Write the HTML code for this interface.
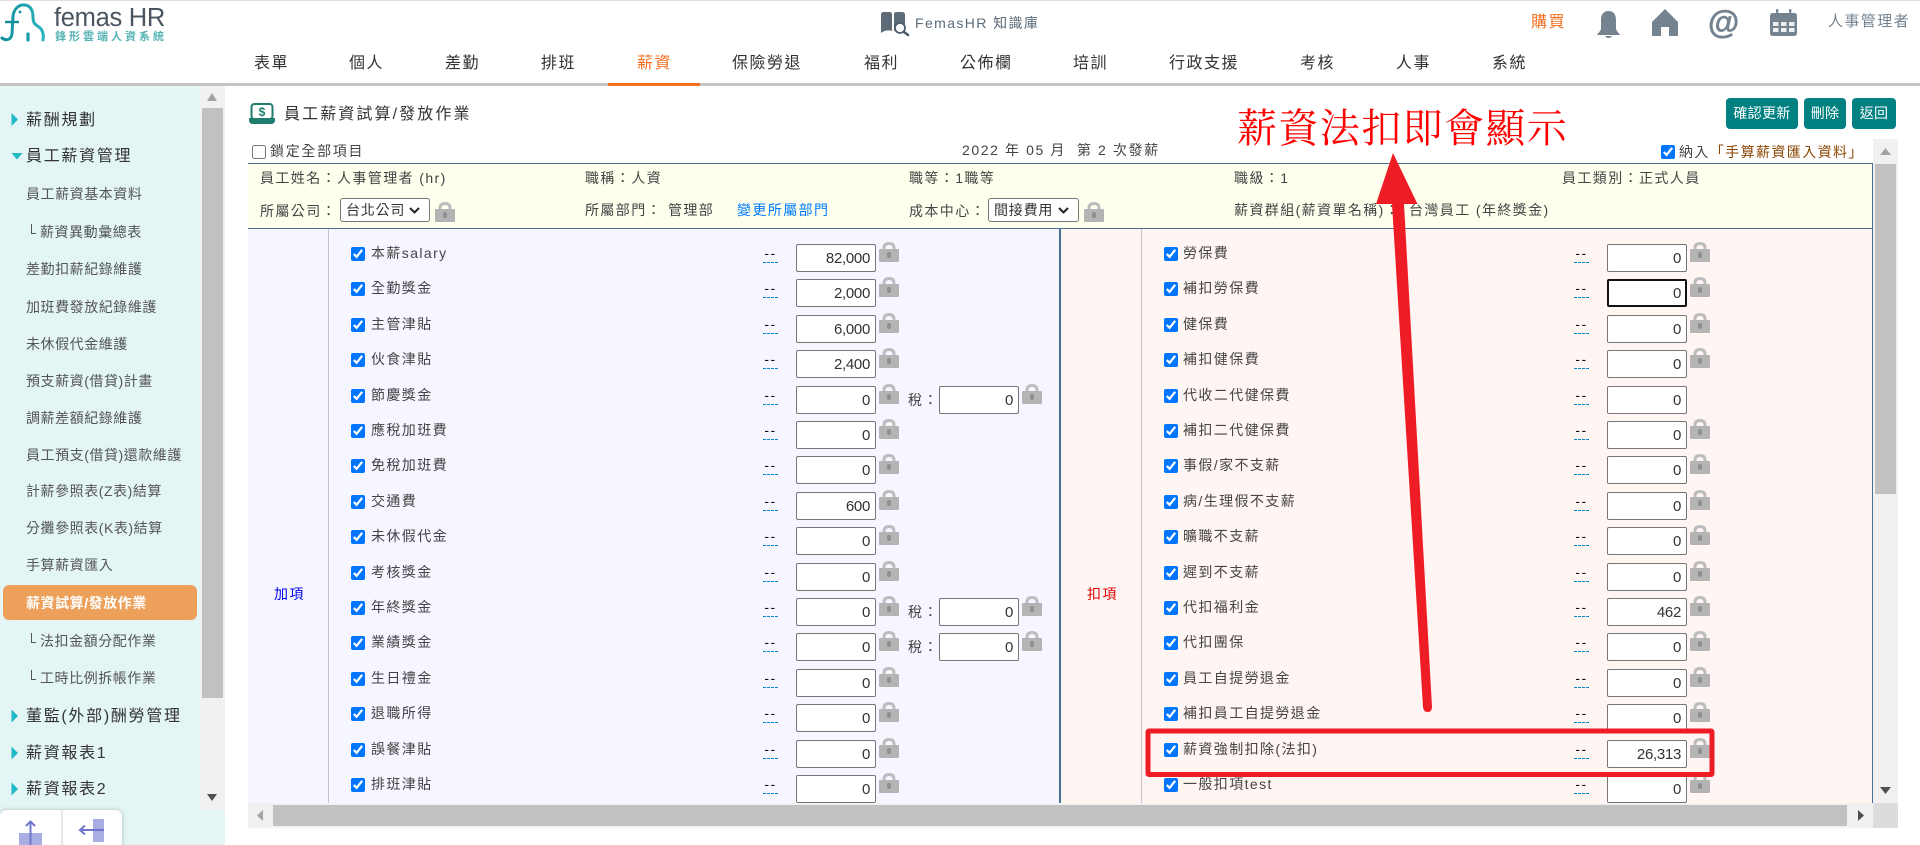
<!DOCTYPE html>
<html lang="zh-Hant"><head><meta charset="utf-8"><title>員工薪資試算/發放作業</title>
<style>
html,body{margin:0;padding:0;width:1920px;height:845px;overflow:hidden;background:#fff}
body{font-family:"Liberation Sans","Noto Sans CJK TC",sans-serif;font-size:14px;color:#444;position:relative}
div,span,a,input,select,svg{position:absolute}
.t{white-space:nowrap;line-height:20px;letter-spacing:1.4px}
.n{font-size:16px;letter-spacing:1.5px;color:#333;top:54px}
.h{font-size:16px;letter-spacing:1.7px;color:#333;left:26px}
.s{letter-spacing:.55px;color:#555;left:26px}
.ss{letter-spacing:.55px;color:#555;left:40px}
.ss:before{content:"";position:absolute;left:-9px;top:2px;width:4px;height:9px;border-left:1px solid #555;border-bottom:1px solid #555}
.b{background:#008080;color:#fff;border-radius:4px;top:98px;height:31px;line-height:30px;text-align:center;letter-spacing:.3px;font-size:14px}
input[type=checkbox]{margin:0;width:14px;height:14px}
.v{width:80px;height:28px;box-sizing:border-box;border:1px solid #767676;border-radius:2px;background:#fff;text-align:right;font-size:15px;line-height:27px;padding-right:5px;color:#333;letter-spacing:-.3px}
.d{width:15px;height:18px;border-bottom:1px dashed #0088cc;line-height:18px;text-align:center;color:#111;letter-spacing:1.5px;font-size:14px}
.x{left:763px}.y{left:1574px}
.l{left:371px}.r{left:1183px}
.c1{left:351px}.c2{left:1164px}
.v1{left:796px}.v2{left:1607px}.v3{left:939px}
select{-webkit-appearance:none;appearance:none;font:14px "Liberation Sans","Noto Sans CJK TC",sans-serif;height:24px;top:198px;background:#fff;color:#333;letter-spacing:.8px;padding:0 0 0 5px;border:1px solid #767676;border-radius:3px}
</style></head><body>
<div style="left:0;top:0;width:1920px;height:1px;background:#e0e0e0"></div>
<svg style="left:0;top:0" width="50" height="46" fill="none"><defs><linearGradient id="g" x1="0" x2="1"><stop offset="0" stop-color="#0f8f9c"/><stop offset="1" stop-color="#2db3bd"/></linearGradient></defs>
<path d="M2 38C6 41 11 40 12 34L13 16C14 8 20 4 25 5C31 6 33 11 33 17C33 24 36 25 39 27C43 30 44 34 43 40" stroke="url(#g)" stroke-width="3" stroke-linecap="round"/><path d="M5 22H19" stroke="#0f8f9c" stroke-width="2.4"/><circle cx="20" cy="12" r="1.4" fill="#0f8f9c"/><path d="M28 34V40" stroke="#1a9ea9" stroke-width="3.2" stroke-linecap="round"/></svg>
<div class="t" style="left:54px;top:1px;font-size:25.500px;line-height:34px;color:#4a5560;letter-spacing:-.3px">femas HR</div>
<div class="t" style="left:55px;top:27px;font-size:11px;letter-spacing:3px;color:#56b3b6;font-weight:bold">鋒形雲端人資系統</div>
<svg style="left:878px;top:8px" width="34" height="30"><path d="M3 7C3 5 4 4 6 4H12C13 4 14 5 14 6V23C11 22 7 22 3 25Z M16 6C16 5 17 4 18 4H24C26 4 27 5 27 7V25C23 22 19 22 16 23Z" fill="#5d6b78"/><circle cx="22" cy="20" r="5" fill="#fff" stroke="#4f5d69" stroke-width="1.8"/><path d="M26 24L30 27" stroke="#4f5d69" stroke-width="2.6" stroke-linecap="round"/></svg>
<div class="t" style="left:915px;top:13px;color:#5b6b78;letter-spacing:1.4px">FemasHR 知識庫</div>
<div class="t" style="left:1531px;top:13px;font-size:16px;letter-spacing:1.5px;color:#f37021">購買</div>
<svg style="left:0;top:0" width="1920" height="50" fill="#74838f"><path d="M1608.5 11C1603 11 1601 15 1601 20V28C1601 31 1598 33 1597 35H1620C1619 33 1616 31 1616 28V20C1616 15 1614 11 1608.5 11Z"/><path d="M1605 36H1612Q1611 38 1608.5 38T1605 36Z"/><path d="M1665 9L1652 22V35A1 1 0 0 0 1653 36H1661V27H1669V36H1677A1 1 0 0 0 1678 35V22Z"/><path d="M1773 13H1794Q1797 13 1797 16V33Q1797 36 1794 36H1773Q1770 36 1770 33V16Q1770 13 1773 13Z"/><rect x="1776" y="9" width="2.4" height="4" rx="1"/><rect x="1789" y="9" width="2.4" height="4" rx="1"/><g fill="#eef1f3"><rect x="1773" y="22" width="5.5" height="4"/><rect x="1781" y="22" width="5.5" height="4"/><rect x="1789" y="22" width="5.5" height="4"/><rect x="1773" y="28" width="5.5" height="4"/><rect x="1781" y="28" width="5.5" height="4"/><rect x="1789" y="28" width="5.5" height="4"/></g></svg>
<div class="t" style="left:1708px;top:4px;font-size:32px;line-height:36px;font-weight:bold;color:#74838f;letter-spacing:0;-webkit-text-stroke:.5px #74838f">@</div>
<div class="t" style="left:1828px;top:12px;font-size:15px;color:#74838f;letter-spacing:1.4px">人事管理者</div>

<div class="t n" style="left:254px">表單</div><div class="t n" style="left:349px">個人</div><div class="t n" style="left:445px">差勤</div><div class="t n" style="left:541px">排班</div><div class="t n" style="left:637px;color:#f37021">薪資</div><div class="t n" style="left:732px">保險勞退</div><div class="t n" style="left:864px">福利</div><div class="t n" style="left:960px">公佈欄</div><div class="t n" style="left:1073px">培訓</div><div class="t n" style="left:1169px">行政支援</div><div class="t n" style="left:1300px">考核</div><div class="t n" style="left:1396px">人事</div><div class="t n" style="left:1492px">系統</div>
<div style="left:0;top:83px;width:1920px;height:3px;background:#c4c4c4"></div>
<div style="left:608px;top:83px;width:92px;height:3px;background:#f37021"></div>

<div style="left:0;top:86px;width:225px;height:759px;background:#e3f5f5"></div>
<div style="left:200px;top:86px;width:25px;height:724px;background:#f1f1f1"></div>
<div style="left:202px;top:108px;width:21px;height:590px;background:#c1c1c1"></div>
<svg style="left:0;top:86px" width="225" height="724"><path d="M207 15L212 7L217 15Z" fill="#a3a3a3"/><path d="M207 708H217L212 715Z" fill="#505050"/><path d="M11.500 27L18 33.500L11.500 40Z M11.500 67H22.500L17 73.500Z M11.500 623.500L18 630L11.500 636.500Z M11.500 660.500L18 667L11.500 673.500Z M11.500 696.500L18 703L11.500 709.500Z" fill="#20b9c6"/></svg>
<div class="t h" style="top:111px">薪酬規劃</div>
<div class="t h" style="top:147px">員工薪資管理</div>
<div class="t s" style="top:184px">員工薪資基本資料</div>
<div class="t ss" style="top:222px">薪資異動彙總表</div>
<div class="t s" style="top:259px">差勤扣薪紀錄維護</div>
<div class="t s" style="top:297px">加班費發放紀錄維護</div>
<div class="t s" style="top:334px">未休假代金維護</div>
<div class="t s" style="top:371px">預支薪資(借貸)計畫</div>
<div class="t s" style="top:408px">調薪差額紀錄維護</div>
<div class="t s" style="top:445px">員工預支(借貸)還款維護</div>
<div class="t s" style="top:481px">計薪參照表(Z表)結算</div>
<div class="t s" style="top:518px">分攤參照表(K表)結算</div>
<div class="t s" style="top:555px">手算薪資匯入</div>
<div style="left:3px;top:585px;width:194px;height:35px;background:#eda05a;border-radius:6px"></div>
<div class="t s" style="top:593px;color:#fff;font-weight:bold">薪資試算/發放作業</div>
<div class="t ss" style="top:631px">法扣金額分配作業</div>
<div class="t ss" style="top:668px">工時比例拆帳作業</div>
<div class="t h" style="top:707px">董監(外部)酬勞管理</div>
<div class="t h" style="top:744px">薪資報表1</div>
<div class="t h" style="top:780px">薪資報表2</div>
<div style="left:0;top:810px;width:122px;height:40px;background:#fff;border-radius:6px 6px 0 0;box-shadow:0 0 4px rgba(0,0,0,.25)"></div>
<svg style="left:0;top:810px" width="122" height="35" fill="none"><path d="M62 0V35" stroke="#d0d0d0"/><rect x="19" y="23" width="23" height="12" fill="#a9aee2"/><path d="M30.500 35V12M26 16L30.500 11.500L35 16" stroke="#6f76cc" stroke-width="2"/><rect x="93" y="9" width="11" height="23" fill="#a9aee2"/><path d="M104 20H80M85 15.500L80 20L85 24.500" stroke="#6f76cc" stroke-width="2"/></svg>

<svg style="left:249px;top:103px" width="27" height="22"><rect x="2.500" y="1" width="21" height="15" rx="3" fill="#fff" stroke="#1f7d6e" stroke-width="2"/><path d="M0 15H26V17Q26 21 22 21H4Q0 21 0 17Z" fill="#1f7d6e"/><text x="13" y="13" font-size="12" font-weight="bold" text-anchor="middle" fill="#1f7d6e" font-family="Liberation Sans">$</text></svg>
<div class="t" style="left:284px;top:105px;font-size:16px;letter-spacing:2.1px;color:#333">員工薪資試算/發放作業</div>
<input type="checkbox" style="left:252px;top:145px">
<div class="t" style="left:270px;top:141px;letter-spacing:1.7px">鎖定全部項目</div>
<div class="t" style="left:962px;top:140px;letter-spacing:1.6px;white-space:pre">2022 年 05 月  第 2 次發薪</div>
<input type="checkbox" checked style="left:1661px;top:145px">
<div class="t" style="left:1679px;top:142px;letter-spacing:1.4px">納入<span style="position:static;color:#8b4500">「手算薪資匯入資料」</span></div>
<div class="b" style="left:1726px;width:72px">確認更新</div><div class="b" style="left:1804px;width:42px">刪除</div><div class="b" style="left:1852px;width:44px">返回</div>

<div style="left:248px;top:163px;width:1625px;height:66px;box-sizing:border-box;background:#ffffee;border:solid #4a6f94;border-width:1px 1px 1px 0"></div>
<div style="left:248px;top:229px;width:812px;height:574px;background:#f5f6ff"></div>
<div style="left:1060px;top:229px;width:812px;height:574px;background:#fff5f3"></div>
<div style="left:1059px;top:229px;width:2px;height:574px;background:#4a6f94"></div>
<div style="left:1872px;top:229px;width:1px;height:574px;background:#4a6f94"></div>
<div style="left:328px;top:229px;width:1px;height:574px;background:#c4c4c4"></div>
<div style="left:1141px;top:229px;width:1px;height:574px;background:#c4c4c4"></div>

<div class="t" style="left:260px;top:168px">員工姓名：人事管理者 (hr)</div><div class="t" style="left:585px;top:168px">職稱：人資</div><div class="t" style="left:909px;top:168px">職等：1職等</div><div class="t" style="left:1234px;top:168px">職級：1</div><div class="t" style="left:1562px;top:168px">員工類別：正式人員</div>
<div class="t" style="left:260px;top:201px">所屬公司：</div><select style="left:340px;width:90px"><option>台北公司</option></select>
<div class="t" style="left:585px;top:200px">所屬部門：</div><div class="t" style="left:668px;top:200px">管理部</div><div class="t" style="left:737px;top:200px;color:#007bff">變更所屬部門</div>
<div class="t" style="left:909px;top:201px">成本中心：</div><select style="left:988px;width:91px"><option>間接費用</option></select>
<div class="t" style="left:1234px;top:200px">薪資群組(薪資單名稱)：</div><div class="t" style="left:1409px;top:200px">台灣員工 (年終獎金)</div>
<div class="t" style="left:274px;top:584px;color:#0000ee">加項</div><div class="t" style="left:1087px;top:584px;color:#e00000">扣項</div>

<svg width="0" height="0"><defs><symbol id="lk" viewBox="0 0 20 20"><path d="M5 9V6Q5 1.500 10 1.500T15 6V9" fill="none" stroke="#bdbdbd" stroke-width="3"/><rect y="7" width="20" height="13" rx="1" fill="#b4b4b4"/><rect x="8" y="10" width="4" height="6" rx="2" fill="#8f8f8f"/></symbol></defs></svg>
<svg style="left:0;top:0" width="1920" height="300"><use href="#lk" x="435" y="202" width="20" height="20"/><use href="#lk" x="1084" y="202" width="20" height="20"/><path d="M410 208L414.500 212.500L419 208M1059 208L1063.500 212.500L1068 208" fill="none" stroke="#222" stroke-width="2"/></svg>

<div style="left:0;top:0;width:1920px;height:845px;clip-path:inset(229px 47px 42px 248px)">
<input type="checkbox" checked class="c1" style="top:247px"><div class="t l" style="top:243px">本薪salary</div><div class="d x" style="top:244px">--</div><div class="v v1" style="top:244px">82,000</div>
<input type="checkbox" checked class="c1" style="top:282px"><div class="t l" style="top:278px">全勤獎金</div><div class="d x" style="top:279px">--</div><div class="v v1" style="top:279px">2,000</div>
<input type="checkbox" checked class="c1" style="top:318px"><div class="t l" style="top:314px">主管津貼</div><div class="d x" style="top:315px">--</div><div class="v v1" style="top:315px">6,000</div>
<input type="checkbox" checked class="c1" style="top:353px"><div class="t l" style="top:349px">伙食津貼</div><div class="d x" style="top:350px">--</div><div class="v v1" style="top:350px">2,400</div>
<input type="checkbox" checked class="c1" style="top:389px"><div class="t l" style="top:385px">節慶獎金</div><div class="d x" style="top:386px">--</div><div class="v v1" style="top:386px">0</div><div class="t" style="left:908px;top:390px">稅：</div><div class="v v3" style="top:386px">0</div>
<input type="checkbox" checked class="c1" style="top:424px"><div class="t l" style="top:420px">應稅加班費</div><div class="d x" style="top:421px">--</div><div class="v v1" style="top:421px">0</div>
<input type="checkbox" checked class="c1" style="top:459px"><div class="t l" style="top:455px">免稅加班費</div><div class="d x" style="top:456px">--</div><div class="v v1" style="top:456px">0</div>
<input type="checkbox" checked class="c1" style="top:495px"><div class="t l" style="top:491px">交通費</div><div class="d x" style="top:492px">--</div><div class="v v1" style="top:492px">600</div>
<input type="checkbox" checked class="c1" style="top:530px"><div class="t l" style="top:526px">未休假代金</div><div class="d x" style="top:527px">--</div><div class="v v1" style="top:527px">0</div>
<input type="checkbox" checked class="c1" style="top:566px"><div class="t l" style="top:562px">考核獎金</div><div class="d x" style="top:563px">--</div><div class="v v1" style="top:563px">0</div>
<input type="checkbox" checked class="c1" style="top:601px"><div class="t l" style="top:597px">年終獎金</div><div class="d x" style="top:598px">--</div><div class="v v1" style="top:598px">0</div><div class="t" style="left:908px;top:602px">稅：</div><div class="v v3" style="top:598px">0</div>
<input type="checkbox" checked class="c1" style="top:636px"><div class="t l" style="top:632px">業績獎金</div><div class="d x" style="top:633px">--</div><div class="v v1" style="top:633px">0</div><div class="t" style="left:908px;top:637px">稅：</div><div class="v v3" style="top:633px">0</div>
<input type="checkbox" checked class="c1" style="top:672px"><div class="t l" style="top:668px">生日禮金</div><div class="d x" style="top:669px">--</div><div class="v v1" style="top:669px">0</div>
<input type="checkbox" checked class="c1" style="top:707px"><div class="t l" style="top:703px">退職所得</div><div class="d x" style="top:704px">--</div><div class="v v1" style="top:704px">0</div>
<input type="checkbox" checked class="c1" style="top:743px"><div class="t l" style="top:739px">誤餐津貼</div><div class="d x" style="top:740px">--</div><div class="v v1" style="top:740px">0</div>
<input type="checkbox" checked class="c1" style="top:778px"><div class="t l" style="top:774px">排班津貼</div><div class="d x" style="top:775px">--</div><div class="v v1" style="top:775px">0</div>

<input type="checkbox" checked class="c2" style="top:247px"><div class="t r" style="top:243px">勞保費</div><div class="d y" style="top:244px">--</div><div class="v v2" style="top:244px">0</div>
<input type="checkbox" checked class="c2" style="top:282px"><div class="t r" style="top:278px">補扣勞保費</div><div class="d y" style="top:279px">--</div><div class="v v2" style="top:279px;border:2px solid #111;line-height:25px;padding-right:4px">0</div>
<input type="checkbox" checked class="c2" style="top:318px"><div class="t r" style="top:314px">健保費</div><div class="d y" style="top:315px">--</div><div class="v v2" style="top:315px">0</div>
<input type="checkbox" checked class="c2" style="top:353px"><div class="t r" style="top:349px">補扣健保費</div><div class="d y" style="top:350px">--</div><div class="v v2" style="top:350px">0</div>
<input type="checkbox" checked class="c2" style="top:389px"><div class="t r" style="top:385px">代收二代健保費</div><div class="d y" style="top:386px">--</div><div class="v v2" style="top:386px">0</div>
<input type="checkbox" checked class="c2" style="top:424px"><div class="t r" style="top:420px">補扣二代健保費</div><div class="d y" style="top:421px">--</div><div class="v v2" style="top:421px">0</div>
<input type="checkbox" checked class="c2" style="top:459px"><div class="t r" style="top:455px">事假/家不支薪</div><div class="d y" style="top:456px">--</div><div class="v v2" style="top:456px">0</div>
<input type="checkbox" checked class="c2" style="top:495px"><div class="t r" style="top:491px">病/生理假不支薪</div><div class="d y" style="top:492px">--</div><div class="v v2" style="top:492px">0</div>
<input type="checkbox" checked class="c2" style="top:530px"><div class="t r" style="top:526px">曠職不支薪</div><div class="d y" style="top:527px">--</div><div class="v v2" style="top:527px">0</div>
<input type="checkbox" checked class="c2" style="top:566px"><div class="t r" style="top:562px">遲到不支薪</div><div class="d y" style="top:563px">--</div><div class="v v2" style="top:563px">0</div>
<input type="checkbox" checked class="c2" style="top:601px"><div class="t r" style="top:597px">代扣福利金</div><div class="d y" style="top:598px">--</div><div class="v v2" style="top:598px">462</div>
<input type="checkbox" checked class="c2" style="top:636px"><div class="t r" style="top:632px">代扣團保</div><div class="d y" style="top:633px">--</div><div class="v v2" style="top:633px">0</div>
<input type="checkbox" checked class="c2" style="top:672px"><div class="t r" style="top:668px">員工自提勞退金</div><div class="d y" style="top:669px">--</div><div class="v v2" style="top:669px">0</div>
<input type="checkbox" checked class="c2" style="top:707px"><div class="t r" style="top:703px">補扣員工自提勞退金</div><div class="d y" style="top:704px">--</div><div class="v v2" style="top:704px">0</div>
<input type="checkbox" checked class="c2" style="top:743px"><div class="t r" style="top:739px">薪資強制扣除(法扣)</div><div class="d y" style="top:740px">--</div><div class="v v2" style="top:740px">26,313</div>
<input type="checkbox" checked class="c2" style="top:778px"><div class="t r" style="top:774px">一般扣項test</div><div class="d y" style="top:775px">--</div><div class="v v2" style="top:775px">0</div>

<svg style="left:0;top:0" width="1920" height="845">
<use href="#lk" x="879" y="242" width="20" height="20"/><use href="#lk" x="879" y="277" width="20" height="20"/><use href="#lk" x="879" y="313" width="20" height="20"/><use href="#lk" x="879" y="348" width="20" height="20"/><use href="#lk" x="879" y="384" width="20" height="20"/><use href="#lk" x="1022" y="384" width="20" height="20"/><use href="#lk" x="879" y="419" width="20" height="20"/><use href="#lk" x="879" y="454" width="20" height="20"/><use href="#lk" x="879" y="490" width="20" height="20"/><use href="#lk" x="879" y="525" width="20" height="20"/><use href="#lk" x="879" y="561" width="20" height="20"/><use href="#lk" x="879" y="596" width="20" height="20"/><use href="#lk" x="1022" y="596" width="20" height="20"/><use href="#lk" x="879" y="631" width="20" height="20"/><use href="#lk" x="1022" y="631" width="20" height="20"/><use href="#lk" x="879" y="667" width="20" height="20"/><use href="#lk" x="879" y="702" width="20" height="20"/><use href="#lk" x="879" y="738" width="20" height="20"/><use href="#lk" x="879" y="773" width="20" height="20"/>
<use href="#lk" x="1690" y="242" width="20" height="20"/><use href="#lk" x="1690" y="277" width="20" height="20"/><use href="#lk" x="1690" y="313" width="20" height="20"/><use href="#lk" x="1690" y="348" width="20" height="20"/><use href="#lk" x="1690" y="419" width="20" height="20"/><use href="#lk" x="1690" y="454" width="20" height="20"/><use href="#lk" x="1690" y="490" width="20" height="20"/><use href="#lk" x="1690" y="525" width="20" height="20"/><use href="#lk" x="1690" y="561" width="20" height="20"/><use href="#lk" x="1690" y="596" width="20" height="20"/><use href="#lk" x="1690" y="631" width="20" height="20"/><use href="#lk" x="1690" y="667" width="20" height="20"/><use href="#lk" x="1690" y="702" width="20" height="20"/><use href="#lk" x="1690" y="738" width="20" height="20"/><use href="#lk" x="1690" y="773" width="20" height="20"/>
</svg>
</div>

<div style="left:1873px;top:139px;width:25px;height:664px;background:#f1f1f1"></div>
<div style="left:1875px;top:164px;width:21px;height:330px;background:#c1c1c1"></div>
<div style="left:248px;top:803px;width:1625px;height:25px;background:#f1f1f1"></div>
<div style="left:273px;top:805px;width:1574px;height:21px;background:#c1c1c1"></div>
<div style="left:1873px;top:803px;width:25px;height:25px;background:#dcdcdc"></div>
<svg style="left:0;top:0" width="1920" height="845"><path d="M1880 155L1885.500 148L1891 155Z" fill="#a3a3a3"/><path d="M1880 787H1891L1885.500 794Z" fill="#505050"/><path d="M263 810V821L257 815.500Z" fill="#a3a3a3"/><path d="M1858 810V821L1864 815.500Z" fill="#505050"/></svg>

<div class="t" style="left:1237px;top:107px;font-family:'Liberation Serif','Noto Serif CJK TC','Noto Serif CJK SC',serif;font-size:40px;line-height:44px;letter-spacing:1.4px;color:#f00">薪資法扣即會顯示</div>
<svg style="left:0;top:0" width="1920" height="845"><path d="M1393 153L1376 204H1392L1423 707Q1423.500 712 1427.500 712Q1432 712 1432 707L1404 204H1417.500Z" fill="#ee1c25"/><rect x="1148" y="731" width="564" height="43.500" rx="1" fill="none" stroke="#ee1c25" stroke-width="5"/></svg>
</body></html>
